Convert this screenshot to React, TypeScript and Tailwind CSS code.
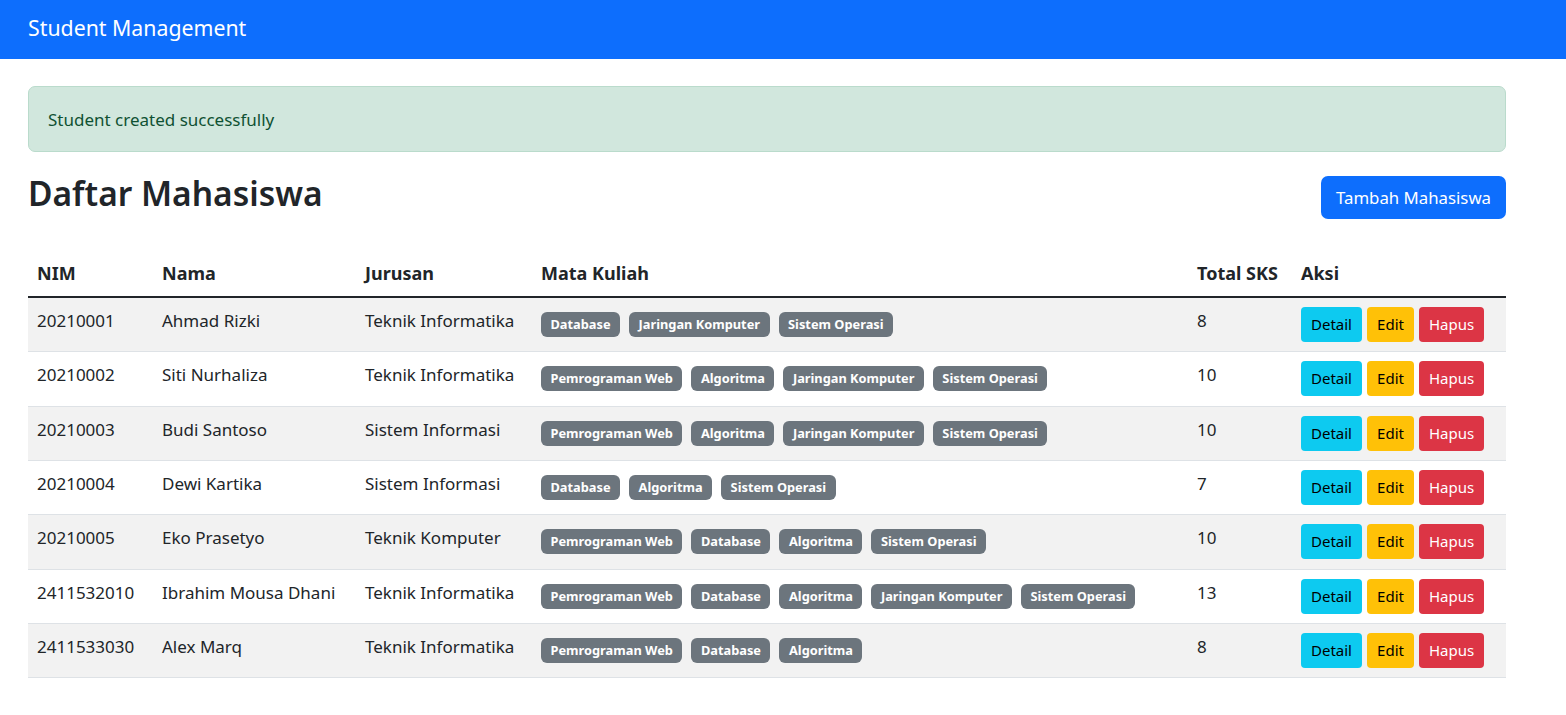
import React from 'react';

interface Student {
  nim: string;
  nama: string;
  jurusan: string;
  mataKuliah: string[];
  sks: number;
}

const students: Student[] = [
  { nim: '20210001', nama: 'Ahmad Rizki', jurusan: 'Teknik Informatika', mataKuliah: ['Database', 'Jaringan Komputer', 'Sistem Operasi'], sks: 8 },
  { nim: '20210002', nama: 'Siti Nurhaliza', jurusan: 'Teknik Informatika', mataKuliah: ['Pemrograman Web', 'Algoritma', 'Jaringan Komputer', 'Sistem Operasi'], sks: 10 },
  { nim: '20210003', nama: 'Budi Santoso', jurusan: 'Sistem Informasi', mataKuliah: ['Pemrograman Web', 'Algoritma', 'Jaringan Komputer', 'Sistem Operasi'], sks: 10 },
  { nim: '20210004', nama: 'Dewi Kartika', jurusan: 'Sistem Informasi', mataKuliah: ['Database', 'Algoritma', 'Sistem Operasi'], sks: 7 },
  { nim: '20210005', nama: 'Eko Prasetyo', jurusan: 'Teknik Komputer', mataKuliah: ['Pemrograman Web', 'Database', 'Algoritma', 'Sistem Operasi'], sks: 10 },
  { nim: '2411532010', nama: 'Ibrahim Mousa Dhani', jurusan: 'Teknik Informatika', mataKuliah: ['Pemrograman Web', 'Database', 'Algoritma', 'Jaringan Komputer', 'Sistem Operasi'], sks: 13 },
  { nim: '2411533030', nama: 'Alex Marq', jurusan: 'Teknik Informatika', mataKuliah: ['Pemrograman Web', 'Database', 'Algoritma'], sks: 8 },
];

const cols = 'grid grid-cols-[125px_203px_176px_656px_104px_214px]';

export default function App() {
  return (
    <div className="min-h-screen bg-white text-[#212529] text-[17px] leading-[27px]" style={{ fontFamily: '"Noto Sans", "Open Sans", sans-serif' }}>
      {/* Navbar */}
      <nav className="h-[59px] bg-[#0d6efd] flex items-center px-[28px]">
        <span className="text-white text-[21.3px] leading-none -mt-[3px]">Student Management</span>
      </nav>

      <main className="px-[28px] pt-[27px] w-[1534px]">
        {/* Alert */}
        <div className="h-[66px] flex items-center px-[19px] bg-[#d1e7dd] border border-[#badbcc] text-[#0f5132] rounded-[7px] mb-[18px]">
          Student created successfully
        </div>

        {/* Title */}
        <div className="h-[54px] flex items-center justify-between">
          <h2 className="text-[33.5px] leading-none font-semibold -mt-[6px]">Daftar Mahasiswa</h2>
          <button className="h-[43px] w-[185px] bg-[#0d6efd] text-white text-[16.8px] rounded-[7px]">Tambah Mahasiswa</button>
        </div>

        {/* Table */}
        <div className="mt-[27px] whitespace-nowrap">
          <div className={`${cols} border-b-2 border-[#212529] font-bold text-[18px]`}>
            {['NIM', 'Nama', 'Jurusan', 'Mata Kuliah', 'Total SKS', 'Aksi'].map(h => (
              <div key={h} className="px-[9px] py-[9px]">{h}</div>
            ))}
          </div>
          {students.map((s, i) => (
            <div key={s.nim} className={`${cols} h-[54.33px] border-b border-[#dee2e6] ${i % 2 === 0 ? 'bg-[#f2f2f2]' : 'bg-white'}`}>
              <div className="px-[9px] py-[9px]">{s.nim}</div>
              <div className="px-[9px] py-[9px]">{s.nama}</div>
              <div className="px-[9px] py-[9px]">{s.jurusan}</div>
              <div className="px-[9px] pt-[14px]">
                <div className="flex gap-[9px]">
                  {s.mataKuliah.map(mk => (
                    <span key={mk} className="h-[25px] flex items-center px-[9.5px] rounded-[6px] bg-[#6c757d] text-white text-[12.8px] font-bold leading-none">
                      {mk}
                    </span>
                  ))}
                </div>
              </div>
              <div className="px-[9px] py-[9px]">{s.sks}</div>
              <div className="px-[9px] pt-[9px]">
                <div className="flex gap-[5px] text-[15px] leading-none">
                  <button className="h-[35px] w-[61px] rounded-[4px] bg-[#0dcaf0] text-black">Detail</button>
                  <button className="h-[35px] w-[47px] rounded-[4px] bg-[#ffc107] text-black">Edit</button>
                  <button className="h-[35px] w-[65px] rounded-[4px] bg-[#dc3545] text-white">Hapus</button>
                </div>
              </div>
            </div>
          ))}
        </div>
      </main>
    </div>
  );
}
